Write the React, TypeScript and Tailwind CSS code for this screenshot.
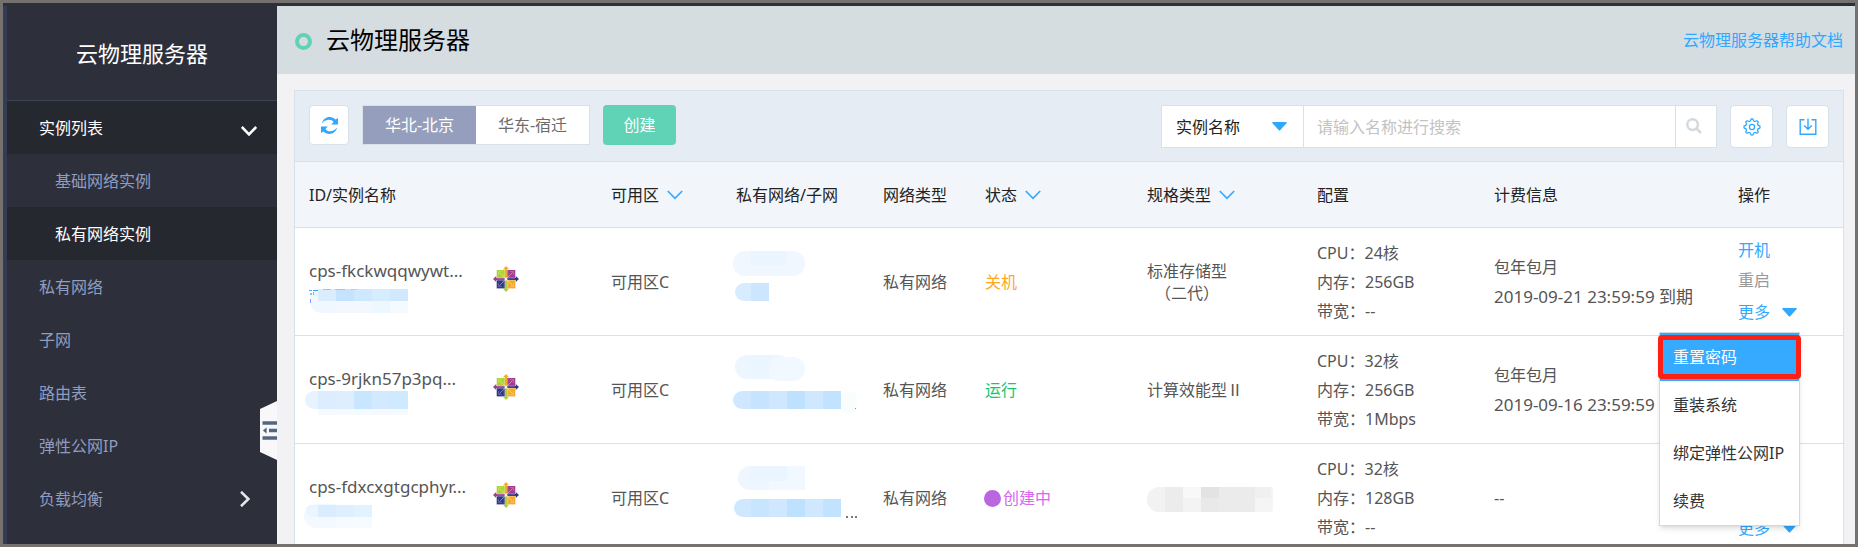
import type { ReactNode } from "react";

type Tile = [x: number, y: number, w: number, h: number, fill: string, r?: number];

const NAV = [
  { label: "私有网络" },
  { label: "子网" },
  { label: "路由表" },
  { label: "弹性公网IP" },
  { label: "负载均衡", more: true },
];

const CELL = "pl-3.5 text-left font-normal";
const TEXT_CELL = "pl-3.5 pt-0.5 text-left font-normal";

function Chevron({ className, width = 1.6 }: { className: string; width?: number }) {
  return (
    <svg className={className} width="16" height="10" viewBox="0 0 16 10" fill="none" stroke="currentColor" strokeWidth={width}>
      <path d="M0.8 1 L8 8.4 L15.2 1" />
    </svg>
  );
}

function Triangle({ className = "" }: { className?: string }) {
  return (
    <svg className={className} width="15" height="9" viewBox="0 0 15 9" fill="#2fa9ff">
      <path d="M1 0 H14 Q15.4 0 14.5 1.2 L8.4 8 Q7.5 9 6.6 8 L0.5 1.2 Q-0.4 0 1 0 Z" />
    </svg>
  );
}

function RefreshIcon() {
  const half = "M0.8 6.4 C2 2.4 5 0 8.6 0 C11 0 13 0.9 14.6 2.4 L17 0.9 V7.6 H10.2 L12.6 5 C11.4 3.6 9.9 2.7 8 2.7 C5.2 2.7 2.8 4 0.8 6.4 Z";
  return (
    <svg width="17" height="17" viewBox="0 0 17 17" fill="#2fa9ff">
      <path d={half} />
      <path d={half} transform="rotate(180 8.5 8.5)" />
    </svg>
  );
}

function GearIcon() {
  const tooth = Array.from({ length: 48 }, (_, i) => {
    const a = (i / 48) * Math.PI * 2;
    const r = 7.1 + 0.95 * Math.tanh(2.2 * Math.cos(8 * a));
    return `${(9 + r * Math.sin(a)).toFixed(2)},${(9 - r * Math.cos(a)).toFixed(2)}`;
  }).join(" ");
  return (
    <svg width="18" height="18" viewBox="0 0 18 18" fill="none" stroke="#2fa9ff" strokeWidth="1.3" strokeLinejoin="round">
      <polygon points={tooth} />
      <circle cx="9" cy="9" r="2.6" />
    </svg>
  );
}

function DownloadIcon() {
  return (
    <svg width="18" height="18" viewBox="0 0 18 18" fill="none" stroke="#2fa9ff" strokeWidth="1.4">
      <path d="M5.5 1.7 H1.2 V16.3 H16.8 V1.7 H12.5" />
      <path d="M9 0.5 V11 M5.2 7.4 L9 11.2 L12.8 7.4" />
    </svg>
  );
}

function SearchIcon() {
  return (
    <svg width="16" height="16" viewBox="0 0 16 16" fill="none" stroke="#d2dae0" strokeWidth="2.5">
      <circle cx="6.6" cy="6.6" r="5.3" />
      <path d="M10.5 10.5 L15 15" />
    </svg>
  );
}

function CentosLogo() {
  return (
    <svg className="-mt-1" width="26" height="26" viewBox="0 0 26 26">
      <rect x="3.7" y="4" width="18.6" height="18.4" fill="#fff" />
      <rect x="3.7" y="4" width="9" height="8.6" fill="#aed136" />
      <rect x="13.3" y="4" width="9" height="8.6" fill="#a53b8d" />
      <rect x="3.7" y="13.6" width="9" height="8.8" fill="#32368a" />
      <rect x="13.3" y="13.6" width="9" height="8.8" fill="#f5a92f" />
      <path d="M13 0 L16 3.2 H14.1 V12.5 H11.9 V3.2 H10 Z" fill="#f5a92f" />
      <path d="M26 13 L22.8 16 V14 H13.5 V12 H22.8 V10 Z" fill="#32368a" />
      <path d="M13 26 L10 22.8 H11.9 V13.5 H14.1 V22.8 H16 Z" fill="#aed136" />
      <path d="M0 13 L3.2 10 V12 H12.5 V14 H3.2 V16 Z" fill="#a53b8d" />
      <path d="M11.3 4 V12 H4 M14.7 4 V12 H22 M11.3 22 V14.3 H4 M14.7 22 V14.3 H22" fill="none" stroke="#fff" strokeOpacity="0.45" strokeWidth="0.7" />
      <path d="M6.5 6.5 L19.5 19.5 M19.5 6.5 L6.5 19.5" stroke="#fff" strokeOpacity="0.5" strokeWidth="0.8" />
      <path d="M5.5 9 V5.5 H9 M17 5.5 H20.5 V9 M20.5 17 V20.5 H17 M9 20.5 H5.5 V17" fill="none" stroke="#fff" strokeOpacity="0.3" strokeWidth="0.7" />
      <circle cx="13" cy="13" r="1.6" fill="#fff" fillOpacity="0.85" />
    </svg>
  );
}

function Mosaic({ tiles, width, height, className = "" }: { tiles: Tile[]; width: number; height: number; className?: string }) {
  return (
    <svg className={`block overflow-visible ${className}`} width={width} height={height} aria-hidden="true">
      {tiles.map(([x, y, w, h, fill, r], i) => (
        <rect key={i} x={x} y={y} width={w} height={h} rx={r ?? 0} fill={fill} />
      ))}
    </svg>
  );
}

interface Row {
  id: string;
  nameTiles: Tile[];
  netTiles: Tile[];
  status: ReactNode;
  type: ReactNode;
  config: [string, string, string];
  billing: string;
  expires?: string;
}

const ROWS: Row[] = [
  {
    id: "cps-fkckwqqwywt...",
    nameTiles: [
      [1, 6, 40, 24, "#f1f7ff", 12],
      [9, 6, 18, 12, "#d9edff"],
      [27, 6, 18, 12, "#c5e3ff"],
      [45, 6, 18, 12, "#cde8ff"],
      [63, 6, 18, 12, "#d6edff"],
      [81, 6, 18, 12, "#d0e9ff"],
      [27, 18, 36, 12, "#f3f8ff"],
      [63, 18, 18, 12, "#edf7ff"],
      [81, 18, 18, 12, "#f5faff"],
      [0, 7, 3, 1, "#4aaef5"],
      [4, 7, 5, 1, "#2fa9ff"],
      [1, 10, 2, 2, "#7cc4f8"],
      [4, 9, 1, 3, "#5cb6f7"],
      [1, 16, 1, 4, "#8f9cf5"],
      [14, 6, 8, 1, "#8dcaf8"],
      [26, 6, 10, 1, "#8dcaf8"],
      [42, 6, 6, 1, "#a5d5fa"],
    ],
    netTiles: [
      [1, 6, 72, 25, "#f0f7ff", 12],
      [19, 6, 18, 14, "#eaf5ff"],
      [37, 6, 18, 14, "#ebf5ff"],
      [3, 38, 30, 18, "#d8ecff", 9],
      [12, 38, 8, 18, "#d8ecff"],
      [19, 38, 18, 18, "#cce6ff"],
    ],
    status: <span className="text-[#ffa81f]">关机</span>,
    type: (
      <span className="inline-block text-center leading-[22px]">
        标准存储型
        <br />
        （二代）
      </span>
    ),
    config: ["24核", "256GB", "--"],
    billing: "包年包月",
    expires: "2019-09-21 23:59:59 到期",
  },
  {
    id: "cps-9rjkn57p3pq...",
    nameTiles: [
      [9, 18, 90, 6, "#f5faff"],
      [-4, 0, 40, 18, "#e7f3ff", 9],
      [9, 0, 18, 18, "#dbedff"],
      [27, 0, 18, 18, "#deeeff"],
      [45, 0, 18, 18, "#c8e6ff"],
      [63, 0, 18, 18, "#d2e9ff"],
      [81, 0, 18, 18, "#cfe9ff"],
    ],
    netTiles: [
      [3, 2, 56, 24, "#edf6ff", 12],
      [36, 4, 37, 24, "#f1f8ff", 12],
      [19, 2, 18, 18, "#e9f5ff"],
      [109, 38, 16, 22, "#fafdfd", 8],
      [1, 38, 36, 18, "#d0e8ff", 9],
      [19, 38, 18, 18, "#c6e4ff"],
      [37, 38, 18, 18, "#d0e8ff"],
      [55, 38, 18, 18, "#bde1ff"],
      [73, 38, 18, 18, "#cfe8ff"],
      [91, 38, 18, 18, "#c2e3ff"],
      [123, 55, 1, 1, "#7d97ad"],
    ],
    status: <span className="text-[#19c56c]">运行</span>,
    type: "计算效能型Ⅱ",
    config: ["32核", "256GB", "1Mbps"],
    billing: "包年包月",
    expires: "2019-09-16 23:59:59 到期",
  },
  {
    id: "cps-fdxcxgtgcphyr...",
    nameTiles: [
      [-5, 5, 40, 24, "#f3f9ff", 12],
      [27, 18, 36, 11, "#f6fbff"],
      [-3, 6, 20, 12, "#ebf5ff", 5],
      [9, 6, 18, 12, "#d9edff"],
      [27, 6, 18, 12, "#dfefff"],
      [45, 6, 18, 12, "#e2f2ff"],
    ],
    netTiles: [
      [6, 5, 40, 24, "#eef6ff", 12],
      [37, 5, 36, 24, "#f2f8ff"],
      [19, 5, 36, 15, "#ebf5ff"],
      [2, 38, 36, 18, "#d0e8ff", 9],
      [19, 38, 18, 18, "#c8e5ff"],
      [37, 38, 18, 18, "#d0e8ff"],
      [55, 38, 18, 18, "#bde1ff"],
      [73, 38, 18, 18, "#cfe8ff"],
      [91, 38, 18, 18, "#c2e3ff"],
      [114, 55, 2, 2, "#777"],
      [119, 55, 2, 2, "#777"],
      [123, 55, 2, 2, "#777"],
    ],
    status: (
      <span className="flex items-center gap-0.5 text-[#d966f0]">
        <span className="-ml-px size-[17px] rounded-full bg-[#b966e0]" />
        创建中
      </span>
    ),
    type: (
      <Mosaic
        className="mt-0.5"
        width={126}
        height={25}
        tiles={[
          [0, 0, 40, 25, "#f2f2f2", 12],
          [86, 0, 40, 25, "#f5f5f5", 3],
          [18, 0, 18, 25, "#ececec"],
          [36, 0, 18, 11, "#f8f8f8"],
          [36, 11, 18, 14, "#f3f3f3"],
          [54, 0, 18, 11, "#e3e3e3"],
          [54, 11, 18, 14, "#e9e9e9"],
          [72, 0, 36, 25, "#ebebeb"],
          [108, 0, 16, 11, "#f0f0f0"],
        ]}
      />
    ),
    config: ["32核", "128GB", "--"],
    billing: "--",
  },
];

const MENU = ["重装系统", "绑定弹性公网IP", "续费"];

function Sidebar() {
  return (
    <aside className="relative w-[270px] shrink-0 bg-[#2d2f3b] text-base text-[#8f9dc2]">
      <h2 className="flex h-[95px] items-center justify-center border-b border-[#3a4354] text-[22px] text-white">云物理服务器</h2>
      <nav>
        <a href="#instances" className="flex h-[53px] items-center justify-between bg-[#262830] pr-5 pl-8 text-white">
          实例列表
          <Chevron className="mt-1.5" width={2.6} />
        </a>
        <a href="#basic" className="flex h-[53px] items-center pl-12">基础网络实例</a>
        <a href="#vpc-instances" className="flex h-[53px] items-center bg-[#262830] pl-12 text-white">私有网络实例</a>
        {NAV.map((item) => (
          <a key={item.label} href={`#${item.label}`} className="flex h-[53px] items-center justify-between pr-6 pl-8">
            {item.label}
            {item.more && <Chevron className="-rotate-90 text-[#e6e6e8]" width={2.6} />}
          </a>
        ))}
      </nav>
      <button type="button" aria-label="收起菜单" className="absolute top-[395px] right-0">
        <svg width="17" height="59" viewBox="0 0 17 59">
          <path d="M0 8 L17 0 V59 L0 51 Z" fill="#f8f8fa" />
          <path d="M2.5 22 H17 M9 29.5 H17 M2.5 37 H17" stroke="#56657f" strokeWidth="3.6" />
          <path d="M6.6 26.6 V32.4 L2.8 29.5 Z" fill="#56657f" />
        </svg>
      </button>
    </aside>
  );
}

function Toolbar() {
  const square = "flex items-center justify-center rounded-[4px] border border-[#d8e1e9] bg-white";
  return (
    <div className="flex items-start justify-between border-b border-[#d8e1e9] bg-[#e5ecf4] px-3.5 pt-3.5 pb-[13px]">
      <div className="flex">
        <button type="button" aria-label="刷新" className={`${square} size-10`}>
          <RefreshIcon />
        </button>
        <div className="ml-[13px] flex h-10 border border-[#d8e1e9]">
          <button type="button" className="w-[113px] bg-[#959fbd] text-white">华北-北京</button>
          <button type="button" className="w-[113px] bg-white text-[#6b6b6b]">华东-宿迁</button>
        </div>
        <button type="button" className="ml-[13px] h-10 w-[73px] rounded-[4px] bg-[#60d2b5] text-white">创建</button>
      </div>
      <div className="flex">
        <div className="flex h-[43px] border border-[#d8e1e9] bg-white">
          <div className="relative w-[142px] border-r border-[#d8e1e9]">
            <select aria-label="搜索字段" className="size-full appearance-none bg-transparent pl-3.5 text-[#222] outline-none">
              <option>实例名称</option>
            </select>
            <Triangle className="pointer-events-none absolute top-4 right-4" />
          </div>
          <input
            aria-label="搜索"
            placeholder="请输入名称进行搜索"
            className="w-[371px] bg-transparent pl-[13px] outline-none placeholder:text-[#c3c3c3]"
          />
          <button type="button" aria-label="搜索" className="flex w-[41px] items-center justify-center border-l border-[#d8e1e9] pr-1 pb-0.5">
            <SearchIcon />
          </button>
        </div>
        <button type="button" aria-label="设置" className={`${square} ml-[13px] size-[43px]`}>
          <GearIcon />
        </button>
        <button type="button" aria-label="导出" className={`${square} ml-[13px] size-[43px]`}>
          <DownloadIcon />
        </button>
      </div>
    </div>
  );
}

function MoreMenu() {
  return (
    <div className="absolute top-[35px] -left-[79px] z-10 w-[141px] border border-[#d5d9dc] bg-white text-[#333] shadow-md">
      <button type="button" className="relative block h-12 w-full bg-[#35aaff] pl-[13px] text-left text-white">
        重置密码
        <span className="absolute -inset-x-0.5 top-0.5 bottom-0.5 rounded-[4px] border-5 border-[#ff2015]" />
      </button>
      {MENU.map((label) => (
        <button key={label} type="button" className="block h-12 w-full pl-[13px] text-left whitespace-nowrap">
          {label}
        </button>
      ))}
    </div>
  );
}

function InstanceTable() {
  const headings: [string, boolean?][] = [
    ["ID/实例名称"],
    ["可用区", true],
    ["私有网络/子网"],
    ["网络类型"],
    ["状态", true],
    ["规格类型", true],
    ["配置"],
    ["计费信息"],
    ["操作"],
  ];
  return (
    <table className="w-full table-fixed border-collapse whitespace-nowrap">
      <colgroup>
        <col className="w-[302px]" />
        <col className="w-[125px]" />
        <col className="w-[147px]" />
        <col className="w-[102px]" />
        <col className="w-[162px]" />
        <col className="w-[170px]" />
        <col className="w-[177px]" />
        <col className="w-[244px]" />
        <col className="w-[119px]" />
      </colgroup>
      <thead className="bg-[#f2f6fb] text-[#222]">
        <tr className="h-[65px] border-b border-[#d8e1e9]">
          {headings.map(([label, sortable]) => (
            <th key={label} className={TEXT_CELL}>
              <span className="flex items-center gap-2">
                {label}
                {sortable && <Chevron className="text-[#2fa9ff]" />}
              </span>
            </th>
          ))}
        </tr>
      </thead>
      <tbody className="text-[#555]">
        {ROWS.map((row, i) => (
          <tr key={row.id} className="h-[108px] border-b border-[#d8e1e9]">
            <td className={CELL}>
              <div className="flex items-center justify-between pr-[78px]">
                <div>
                  <div className="text-[17px] leading-6">{row.id}</div>
                  <Mosaic tiles={row.nameTiles} width={100} height={21} />
                </div>
                <CentosLogo />
              </div>
            </td>
            <td className={TEXT_CELL}>可用区C</td>
            <td className={CELL}>
              <Mosaic tiles={row.netTiles} width={126} height={72} className="-ml-1" />
            </td>
            <td className={TEXT_CELL}>私有网络</td>
            <td className={TEXT_CELL}>{row.status}</td>
            <td className={TEXT_CELL}>{row.type}</td>
            <td className={`${TEXT_CELL} leading-[29px]`}>
              <div>CPU：{row.config[0]}</div>
              <div>内存：{row.config[1]}</div>
              <div>带宽：{row.config[2]}</div>
            </td>
            <td className={`${TEXT_CELL} leading-[29px]`}>
              <div>{row.billing}</div>
              {row.expires && <div className="text-[17px]">{row.expires}</div>}
            </td>
            <td className={`${CELL} leading-[30px]`}>
              <a href="#start" className="block text-[#2fa9ff]">开机</a>
              <span className="block text-[#999]">重启</span>
              <div className="relative mt-0.5">
                <button type="button" className="flex items-center gap-3 text-[#2fa9ff]">
                  更多
                  <Triangle />
                </button>
                {i === 0 && <MoreMenu />}
              </div>
            </td>
          </tr>
        ))}
      </tbody>
    </table>
  );
}

export default function App() {
  return (
    <div className="h-screen overflow-hidden border-[3px] border-[#75716f] bg-[#2d2f3b] pt-[3px] font-['Noto_Sans','Noto_Sans_CJK_SC',sans-serif] text-base">
      <div className="flex h-full border-l-4 border-[#343c54]">
        <Sidebar />
        <div className="flex min-w-0 flex-1 flex-col bg-[#f2f2f4]">
          <header className="flex h-[68px] shrink-0 items-center justify-between bg-[#d6dde0] pr-3 pl-[18px]">
            <h1 className="flex items-center gap-3.5 text-2xl text-black">
              <span className="mt-0.5 size-[17px] rounded-full border-4 border-[#61d3b5]" />
              云物理服务器
            </h1>
            <a href="#help" className="text-[#2fa9ff]">云物理服务器帮助文档</a>
          </header>
          <main className="min-h-0 flex-1 overflow-y-auto pt-4 pr-[11px] pl-[17px] [scrollbar-width:none]">
            <section className="border border-[#d8e1e9] bg-white">
              <Toolbar />
              <InstanceTable />
            </section>
          </main>
        </div>
      </div>
    </div>
  );
}
